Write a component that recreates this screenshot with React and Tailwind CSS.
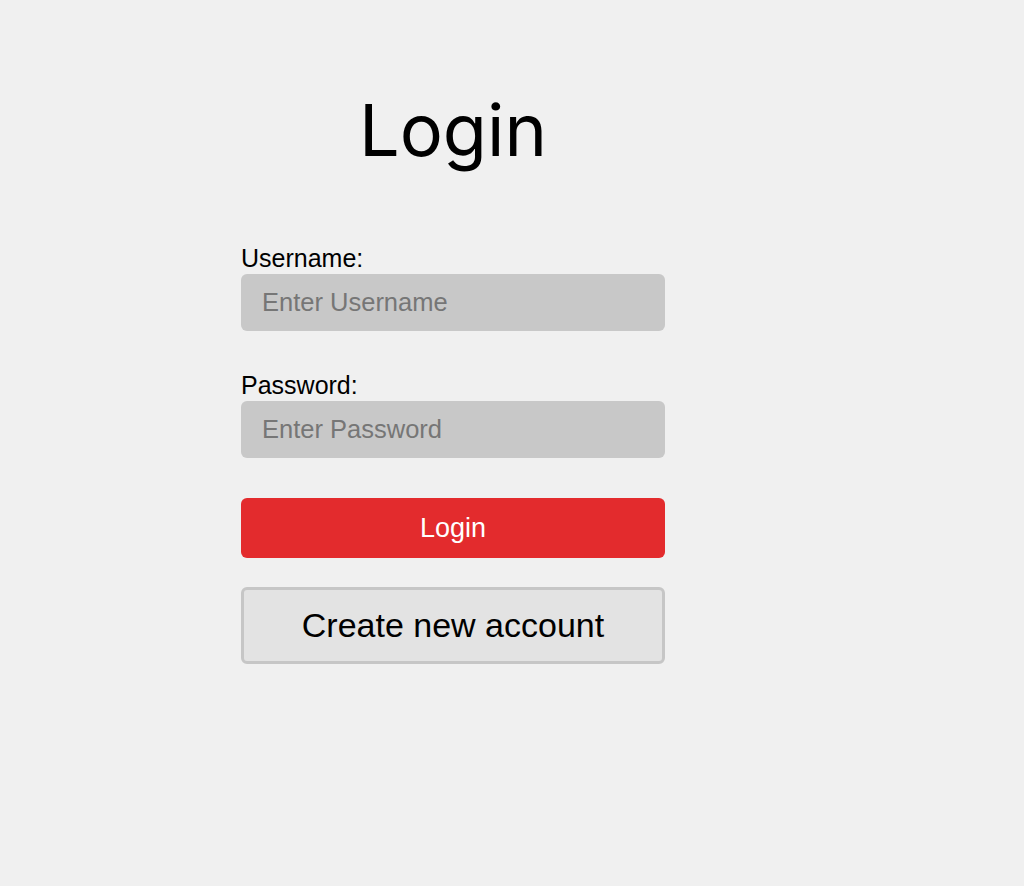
import React from "react";

const Field = ({ label, type, placeholder }) => (
  <div className="flex flex-col">
    <label className="mb-0.5 text-[25px] leading-[28px] text-black">{label}</label>
    <input
      type={type}
      placeholder={placeholder}
      className="h-[57px] w-full rounded-md bg-[#c8c8c8] px-[21px] text-[25.5px] text-black outline-none placeholder:text-[#767676]"
    />
  </div>
);

export default function App() {
  return (
    <div className="min-h-screen bg-[#f0f0f0] font-['Liberation_Sans',Arial,sans-serif]">
      <div className="ml-[241px] flex w-[424px] flex-col pt-[94px]">
        <h1 className="text-center font-['Inter',sans-serif] text-[72px] leading-none text-black">
          Login
        </h1>

        <div className="mt-[78px] flex flex-col gap-[40px]">
          <Field label="Username:" type="text" placeholder="Enter Username" />
          <Field label="Password:" type="password" placeholder="Enter Password" />
        </div>

        <button className="mt-[40px] h-[60px] w-full rounded-md bg-[#e32b2d] text-[27px] text-white">
          Login
        </button>

        <button className="mt-[29px] h-[77px] w-full rounded-md border-[3px] border-[#c6c6c6] bg-[#e3e3e3] text-[34px] text-black">
          Create new account
        </button>
      </div>
    </div>
  );
}
